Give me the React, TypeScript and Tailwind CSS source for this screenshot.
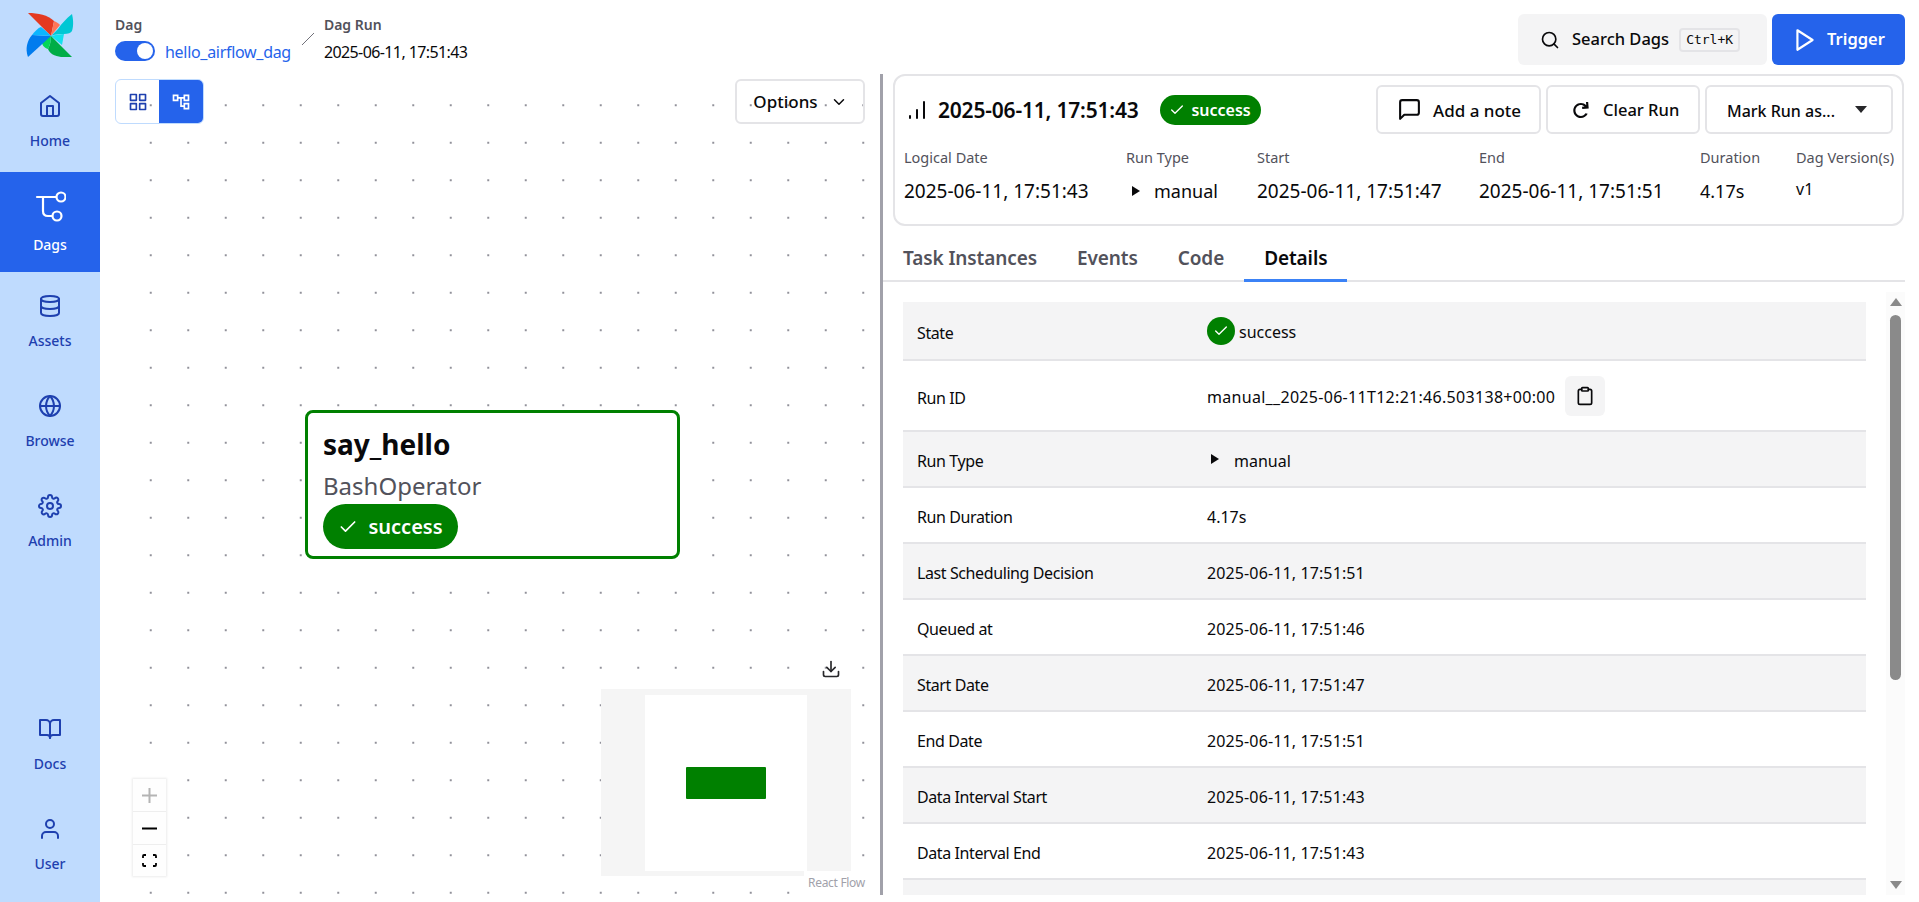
import { Clipboard, Download, ChevronDown } from 'lucide-react'
import { FiHome, FiDatabase, FiGlobe, FiSettings, FiBookOpen, FiUser, FiGrid, FiSearch, FiPlay, FiMessageSquare, FiCheck } from 'react-icons/fi'
import { MdOutlineAccountTree } from 'react-icons/md'
import { CgRedo } from 'react-icons/cg'
import { ReactNode } from 'react'

const FONT = 'font-["Noto_Sans",sans-serif]'

function Txt({ children, className = '' }: { children: ReactNode; className?: string }) {
  return <span className={`block pt-[4px] ${className}`}>{children}</span>
}

const ROWS: { label: string; value: ReactNode; h: string; shade: boolean }[] = [
  {
    label: 'State',
    h: 'h-[59px]',
    shade: true,
    value: (
      <span className="flex items-center gap-[4px]">
        <span className="flex h-7 w-7 items-center justify-center rounded-full bg-[#008000] text-white">
          <FiCheck size={16} />
        </span>
        <span className="pt-[2px]">success</span>
      </span>
    ),
  },
  {
    label: 'Run ID',
    h: 'h-[71px]',
    shade: false,
    value: (
      <span className="flex items-center gap-[10px]">
        <span className="pt-[2px] tracking-[0.3px]">manual__2025-06-11T12:21:46.503138+00:00</span>
        <span className="flex h-10 w-10 items-center justify-center rounded-md bg-[#f4f4f5]">
          <Clipboard size={20} />
        </span>
      </span>
    ),
  },
  {
    label: 'Run Type',
    h: 'h-[56px]',
    shade: true,
    value: (
      <span className="flex items-center gap-[15px] pl-[4px]">
        <PlayTriangle />
        <span className="pt-[4px]">manual</span>
      </span>
    ),
  },
  { label: 'Run Duration', h: 'h-[56px]', shade: false, value: <Txt>4.17s</Txt> },
  { label: 'Last Scheduling Decision', h: 'h-[56px]', shade: true, value: <Txt className="tracking-[0.12px]">2025-06-11, 17:51:51</Txt> },
  { label: 'Queued at', h: 'h-[56px]', shade: false, value: <Txt className="tracking-[0.12px]">2025-06-11, 17:51:46</Txt> },
  { label: 'Start Date', h: 'h-[56px]', shade: true, value: <Txt className="tracking-[0.12px]">2025-06-11, 17:51:47</Txt> },
  { label: 'End Date', h: 'h-[56px]', shade: false, value: <Txt className="tracking-[0.12px]">2025-06-11, 17:51:51</Txt> },
  { label: 'Data Interval Start', h: 'h-[56px]', shade: true, value: <Txt className="tracking-[0.12px]">2025-06-11, 17:51:43</Txt> },
  { label: 'Data Interval End', h: 'h-[56px]', shade: false, value: <Txt className="tracking-[0.12px]">2025-06-11, 17:51:43</Txt> },
]

function PlayTriangle() {
  return (
    <svg width="8" height="10" viewBox="0 0 8 10" className="shrink-0">
      <path d="M0 0 L8 5 L0 10 Z" fill="#09090b" />
    </svg>
  )
}

function Pinwheel() {
  return (
    <svg width="60" height="60" viewBox="0 0 60 60">
      <path d="M8 8 C18 8 28 10 34 16 L31 31 Z" fill="#e43921" />
      <path d="M34 16 C37 17 39 19 40 20 C37 24 34 27 31 31 Z" fill="#ff7557" />
      <path d="M52 9 C46 14 42 18 38 24 L31 31 C36 29 42 29 44 29 C48 29 51 28 52 26 C54 20 53 13 52 9 Z" fill="#00c7d4" />
      <path d="M31 31 C35 30 40 29 44 29 L42 40 Z" fill="#11e1ee" />
      <path d="M52 52 L31 31 C31 36 30 40 28 44 C30 50 38 52 43 52 Z" fill="#00ad46" />
      <path d="M31 31 L22 35 C21 39 24 43 28 44 C30 40 31 36 31 31 Z" fill="#04d659" />
      <path d="M8 52 C5 44 7 36 12 30 L31 31 Z" fill="#017cee" />
      <path d="M31 31 L12 30 C15 26 18 23 21 22 C25 25 28 28 31 31 Z" fill="#0cb6ff" />
    </svg>
  )
}

function DagsIcon() {
  return (
    <svg width="32" height="32" viewBox="0 0 32 32" fill="none" stroke="currentColor" strokeWidth="2.2" strokeLinecap="round" strokeLinejoin="round">
      <circle cx="27" cy="7" r="4.5" />
      <circle cx="23" cy="26" r="4.5" />
      <path d="M3 7 H22" />
      <path d="M9 7 V21 C9 24 11 26 14 26 H18" />
    </svg>
  )
}

function NavItem({ label, icon, active }: { label: string; icon: ReactNode; active?: boolean }) {
  return (
    <div
      className={`flex h-[100px] w-full flex-col items-center justify-center gap-[13px] text-[14px] font-medium ${
        active ? 'bg-[#2563eb] text-white' : 'text-[#1e40af]'
      }`}
    >
      {icon}
      <span className="leading-5">{label}</span>
    </div>
  )
}

function Meta({ label, value, className }: { label: string; value: ReactNode; className: string }) {
  return (
    <div className={className}>
      <div className="text-[14.5px] leading-5 text-[#52525b]">{label}</div>
      <div className="mt-[10px] flex h-[28px] items-center text-[18px] text-[#09090b]">{value}</div>
    </div>
  )
}

export default function App() {
  return (
    <div className={`flex h-[902px] w-full overflow-hidden bg-white text-[#09090b] ${FONT}`}>
      {/* Sidebar */}
      <aside className="flex w-[100px] shrink-0 flex-col items-center bg-[#bfdbfe]">
        <div className="flex h-[72px] items-center justify-center pb-[2px]">
          <Pinwheel />
        </div>
        <NavItem label="Home" icon={<FiHome size={24} />} />
        <NavItem label="Dags" icon={<DagsIcon />} active />
        <NavItem label="Assets" icon={<FiDatabase size={24} />} />
        <NavItem label="Browse" icon={<FiGlobe size={24} />} />
        <NavItem label="Admin" icon={<FiSettings size={24} />} />
        <div className="mt-auto w-full pb-[7px]">
          <NavItem label="Docs" icon={<FiBookOpen size={24} />} />
          <NavItem label="User" icon={<FiUser size={24} />} />
        </div>
      </aside>

      <main className="flex min-w-0 flex-1 flex-col pl-[15px] pr-[14px]">
        {/* Top bar */}
        <header className="flex h-[74px] shrink-0 items-start justify-between pt-[14px]">
          <div className="flex items-start">
            <div>
              <div className="text-[14px] font-semibold leading-[22px] text-[#52525b]">Dag</div>
              <div className="flex h-[30px] items-center gap-[10px]">
                <span className="flex h-5 w-10 items-center justify-end rounded-full bg-[#2563eb] pr-[2px]">
                  <span className="h-4 w-4 rounded-full bg-white" />
                </span>
                <span className="pt-[2px] text-[16px] tracking-[-0.3px] text-[#2563eb]">hello_airflow_dag</span>
              </div>
            </div>
            <svg width="14" height="14" viewBox="0 0 14 14" className="ml-[10px] mr-[9px] mt-[18px]">
              <path d="M1 13 L13 1" stroke="#71717a" strokeWidth="1" />
            </svg>
            <div>
              <div className="text-[14px] font-semibold leading-[22px] text-[#52525b]">Dag Run</div>
              <div className="flex h-[30px] items-center pt-[2px] text-[16px] tracking-[-0.6px]">2025-06-11, 17:51:43</div>
            </div>
          </div>
          <div className="flex gap-[5px]">
            <div className="flex h-[51px] w-[249px] items-center rounded-md bg-[#f4f4f5] pl-[22px] text-[16.5px] font-medium">
              <FiSearch size={20} />
              <span className="ml-[12px]">Search Dags</span>
              <kbd className='ml-[10px] rounded border-2 border-[#e4e4e7] px-[5px] font-["DejaVu_Sans_Mono",monospace] text-[13px] font-normal leading-[20px]'>Ctrl+K</kbd>
            </div>
            <div className="flex h-[51px] w-[133px] items-center gap-[9px] rounded-md bg-[#2563eb] pl-[20px] text-[16.5px] font-semibold text-white">
              <FiPlay size={26} />
              Trigger
            </div>
          </div>
        </header>

        <div className="flex min-h-0 flex-1 pb-[7px]">
          {/* Graph pane */}
          <section className="relative h-full w-[765px] shrink-0 bg-[radial-gradient(circle,#91919a_1px,transparent_1.2px)] bg-[length:37.5px_37.5px] bg-[position:17px_12.5px]">
            <div className="absolute left-0 top-[5px] flex h-[45px] w-[89px] overflow-hidden rounded-md border border-[#bfdbfe]">
              <div className="flex w-[43px] items-center justify-center text-[#1e40af]">
                <FiGrid size={20} />
              </div>
              <div className="flex flex-1 items-center justify-center bg-[#2563eb] text-white">
                <MdOutlineAccountTree size={20} />
              </div>
            </div>
            <div className="absolute left-[620px] top-[5px] flex h-[45px] w-[130px] items-center justify-center gap-[12px] rounded-md border-2 border-[#e4e4e7] pl-[1px] text-[17px] font-medium">
              Options
              <ChevronDown size={18} />
            </div>

            {/* Task node */}
            <div className="absolute left-[190px] top-[336px] h-[149px] w-[375px] rounded-lg border-[3px] border-[#008000] bg-white pl-[15px] pt-[15px]">
              <div className="text-[28px] font-bold leading-8">say_hello</div>
              <div className="mt-[10px] text-[24px] leading-8 text-[#52525b]">BashOperator</div>
              <div className="mt-[2px] flex h-[45px] w-[135px] items-center justify-center gap-[10px] rounded-full bg-[#008000] text-[20px] font-semibold text-white">
                <FiCheck size={20} />
                success
              </div>
            </div>

            <Download size={20} className="absolute left-[706px] top-[585px] text-[#27272a]" />

            {/* Minimap */}
            <div className="absolute left-[486px] top-[615px] flex h-[187px] w-[250px] items-start justify-center bg-[#f5f5f5] pt-[6px]">
              <div className="flex h-[176px] w-[162px] items-center justify-center bg-white">
                <div className="h-[32px] w-[80px] rounded-[1px] bg-[#008000]" />
              </div>
            </div>
            <div className="absolute left-[689px] top-[797px] bg-white px-[4px] text-[12px] leading-6 tracking-[-0.3px] text-[#a1a1aa]">React Flow</div>

            {/* Zoom controls */}
            <div className="absolute left-[18px] top-[705px] flex w-[33px] flex-col bg-[#fefefe] shadow-[0_0_2px_1px_rgba(0,0,0,0.08)]">
              <div className="flex h-[33px] items-center justify-center border-b border-[#eeeeee]">
                <svg width="15" height="15" viewBox="0 0 15 15"><path d="M7.5 0 V15 M0 7.5 H15" stroke="#b4b4b4" strokeWidth="2" /></svg>
              </div>
              <div className="flex h-[33px] items-center justify-center border-b border-[#eeeeee]">
                <svg width="15" height="3" viewBox="0 0 15 3"><path d="M0 1.5 H15" stroke="#000" strokeWidth="2" /></svg>
              </div>
              <div className="flex h-[31px] items-center justify-center">
                <svg width="15" height="13" viewBox="0 0 15 13" fill="none" stroke="#000" strokeWidth="1.8">
                  <path d="M1 4 V2 Q1 1 2 1 H4 M11 1 H13 Q14 1 14 2 V4 M14 9 V11 Q14 12 13 12 H11 M4 12 H2 Q1 12 1 11 V9" />
                </svg>
              </div>
            </div>
          </section>

          <div className="w-[3px] shrink-0 bg-[#a1a1aa]" />

          {/* Details pane */}
          <section className="flex min-w-0 flex-1 flex-col">
            <div className="ml-[10px] h-[152px] w-[1011px] shrink-0 rounded-xl border-2 border-[#e4e4e7]">
              <div className="flex h-[58px] items-end justify-between pl-[12px] pr-[9px]">
                <div className="flex h-[49px] items-center">
                  <svg width="20" height="20" viewBox="0 0 20 20" fill="none" stroke="#09090b" strokeWidth="2" strokeLinecap="round" className="mt-[1px]">
                    <path d="M3 18 V16 M10 18 V10 M17 18 V2" />
                  </svg>
                  <span className="ml-[11px] mt-[3px] text-[21px] font-semibold tracking-[-0.2px]">2025-06-11, 17:51:43</span>
                  <span className="ml-[21px] flex h-[30px] w-[101px] items-center justify-center gap-[6px] rounded-full bg-[#008000] text-[16px] font-semibold text-white">
                    <FiCheck size={16} />
                    success
                  </span>
                </div>
                <div className="flex gap-[5px] text-[16.5px] font-medium">
                  <div className="flex h-[49px] w-[165px] items-center gap-[11px] rounded-md border-2 border-[#e4e4e7] pl-[19px]">
                    <FiMessageSquare size={25} />
                    <span className="pt-[2px] text-[17px]">Add a note</span>
                  </div>
                  <div className="flex h-[49px] w-[154px] items-center gap-[9px] rounded-md border-2 border-[#e4e4e7] pl-[20px]">
                    <CgRedo size={26} />
                    <span className="pt-[2px]">Clear Run</span>
                  </div>
                  <div className="flex h-[49px] w-[188px] items-center gap-[20px] rounded-md border-2 border-[#e4e4e7] pl-[20px] text-[16px]">
                    <span className="pt-[2px]">Mark Run as...</span>
                    <svg width="12" height="7" viewBox="0 0 12 7"><path d="M0 0 H12 L6 7 Z" fill="#27272a" /></svg>
                  </div>
                </div>
              </div>
              <div className="relative mt-[13px]">
                <Meta className="absolute left-[9px] top-0" label="Logical Date" value={<span className="text-[19px]">2025-06-11, 17:51:43</span>} />
                <Meta
                  className="absolute left-[231px] top-0"
                  label="Run Type"
                  value={
                    <span className="flex items-center gap-[14px] pl-[6px]">
                      <PlayTriangle />
                      manual
                    </span>
                  }
                />
                <Meta className="absolute left-[362px] top-0" label="Start" value={<span className="text-[19px]">2025-06-11, 17:51:47</span>} />
                <Meta className="absolute left-[584px] top-0" label="End" value={<span className="text-[19px]">2025-06-11, 17:51:51</span>} />
                <Meta className="absolute left-[805px] top-0" label="Duration" value="4.17s" />
                <Meta className="absolute left-[901px] top-0" label="Dag Version(s)" value={<span className="pb-[5px] text-[16px]">v1</span>} />
              </div>
            </div>

            {/* Tabs */}
            <div className="flex h-[56px] shrink-0 items-end border-b-2 border-[#e4e4e7] text-[19px] font-semibold tracking-[-0.1px] text-[#52525b]">
              <span className="mb-[-2px] flex h-[48px] items-center border-b-[3px] border-transparent px-[20px] pt-[3px]">Task Instances</span>
              <span className="mb-[-2px] flex h-[48px] items-center border-b-[3px] border-transparent px-[20px] pt-[3px]">Events</span>
              <span className="mb-[-2px] flex h-[48px] items-center border-b-[3px] border-transparent px-[20px] pt-[3px]">Code</span>
              <span className="mb-[-2px] flex h-[48px] items-center border-b-[3px] border-[#3b82f6] px-[20px] pt-[3px] text-[#09090b]">Details</span>
            </div>

            {/* Details table */}
            <div className="relative flex min-h-0 flex-1 overflow-hidden pl-[20px] pt-[20px]">
              <div className="w-[963px] shrink-0 text-[16px]">
                {ROWS.map((row) => (
                  <div key={row.label} className={`flex items-center border-b-2 border-[#e4e4e7] ${row.h} ${row.shade ? 'bg-[#f4f4f5]' : ''}`}>
                    <div className="w-[304px] shrink-0 pl-[14px] pt-[4px] tracking-[-0.4px]">{row.label}</div>
                    <div>{row.value}</div>
                  </div>
                ))}
                <div className="h-[56px] bg-[#f4f4f5]" />
              </div>
              {/* Scrollbar */}
              <div className="absolute bottom-0 right-0 top-[10px] w-[19px] bg-[#fbfbfb]">
                <svg width="12" height="8" viewBox="0 0 12 8" className="absolute left-[4px] top-[6px]"><path d="M6 0 L12 8 H0 Z" fill="#8a8a8a" /></svg>
                <div className="absolute left-[4px] top-[23px] h-[365px] w-[11px] rounded-md bg-[#8a8a8a]" />
                <svg width="12" height="8" viewBox="0 0 12 8" className="absolute bottom-[6px] left-[4px]"><path d="M0 0 H12 L6 8 Z" fill="#8a8a8a" /></svg>
              </div>
            </div>
          </section>
        </div>
      </main>
    </div>
  )
}
